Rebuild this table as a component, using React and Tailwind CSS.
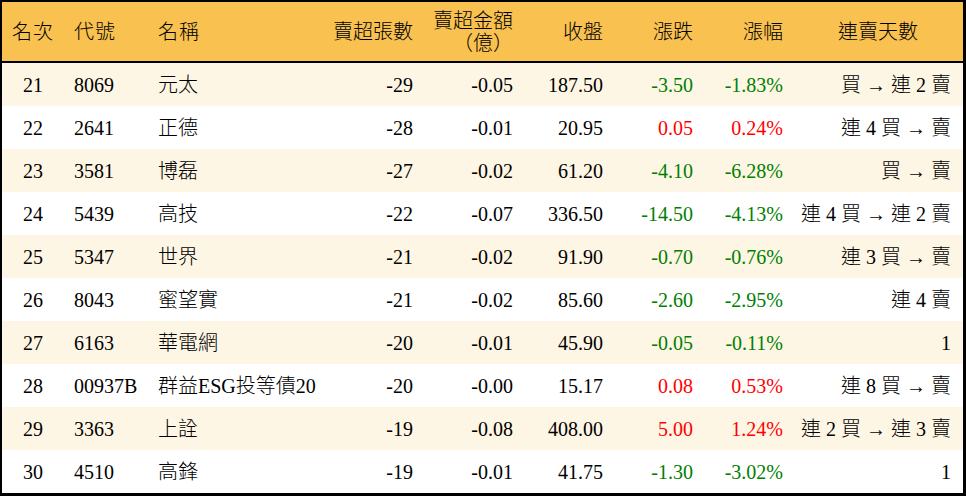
import React from "react";

const rows = [
  ["21", "8069", "元太", "-29", "-0.05", "187.50", "-3.50", "-1.83%", "買 → 連 2 賣"],
  ["22", "2641", "正德", "-28", "-0.01", "20.95", "0.05", "0.24%", "連 4 買 → 賣"],
  ["23", "3581", "博磊", "-27", "-0.02", "61.20", "-4.10", "-6.28%", "買 → 賣"],
  ["24", "5439", "高技", "-22", "-0.07", "336.50", "-14.50", "-4.13%", "連 4 買 → 連 2 賣"],
  ["25", "5347", "世界", "-21", "-0.02", "91.90", "-0.70", "-0.76%", "連 3 買 → 賣"],
  ["26", "8043", "蜜望實", "-21", "-0.02", "85.60", "-2.60", "-2.95%", "連 4 賣"],
  ["27", "6163", "華電網", "-20", "-0.01", "45.90", "-0.05", "-0.11%", "1"],
  ["28", "00937B", "群益ESG投等債20", "-20", "-0.00", "15.17", "0.08", "0.53%", "連 8 買 → 賣"],
  ["29", "3363", "上詮", "-19", "-0.08", "408.00", "5.00", "1.24%", "連 2 買 → 連 3 賣"],
  ["30", "4510", "高鋒", "-19", "-0.01", "41.75", "-1.30", "-3.02%", "1"],
];

const cols = "grid grid-cols-[62px_84px_175px_100px_100px_90px_90px_90px_170px]";

export default function App() {
  return (
    <div
      className="w-[966px] h-[496px] bg-white text-black text-[20px] font-light border-l-2 border-t-2 border-r-[3px] border-b-[3px] border-black"
      style={{ fontFamily: '"Liberation Serif", "Noto Sans CJK TC", serif' }}
    >
      <div className={`${cols} h-[59px] bg-[#f9c14f] items-center border-b-2 border-black box-content`}>
        <div className="text-center tracking-[1px]">名次</div>
        <div className="pl-[10px] tracking-[1px]">代號</div>
        <div className="pl-[10px] tracking-[1px]">名稱</div>
        <div className="text-right pr-[10px]">賣超張數</div>
        <div className="text-right pr-[10px] leading-[22px]">
          <div>賣超金額</div>
          <div className="flex justify-end">
            <span className="inline-block w-[20px] text-right">（</span>
            <span>億</span>
            <span className="inline-block w-[20px] text-left">）</span>
          </div>
        </div>
        <div className="text-right pr-[10px]">收盤</div>
        <div className="text-right pr-[10px]">漲跌</div>
        <div className="text-right pr-[10px]">漲幅</div>
        <div className="text-center">連賣天數</div>
      </div>
      {rows.map((r, i) => {
        const up = !r[6].startsWith("-");
        const color = up ? "text-[#ff0000]" : "text-[#008000]";
        return (
          <div
            key={r[0]}
            className={`${cols} h-[43px] items-center ${i % 2 === 0 ? "bg-[#fef6e4]" : "bg-white"}`}
          >
            <div className="text-center">{r[0]}</div>
            <div className="pl-[10px]">{r[1]}</div>
            <div className="pl-[10px] whitespace-nowrap">{r[2]}</div>
            <div className="text-right pr-[10px]">{r[3]}</div>
            <div className="text-right pr-[10px]">{r[4]}</div>
            <div className="text-right pr-[10px]">{r[5]}</div>
            <div className={`text-right pr-[10px] ${color}`}>{r[6]}</div>
            <div className={`text-right pr-[10px] ${color}`}>{r[7]}</div>
            <div className="text-right pr-[12px] whitespace-nowrap">{r[8]}</div>
          </div>
        );
      })}
    </div>
  );
}
